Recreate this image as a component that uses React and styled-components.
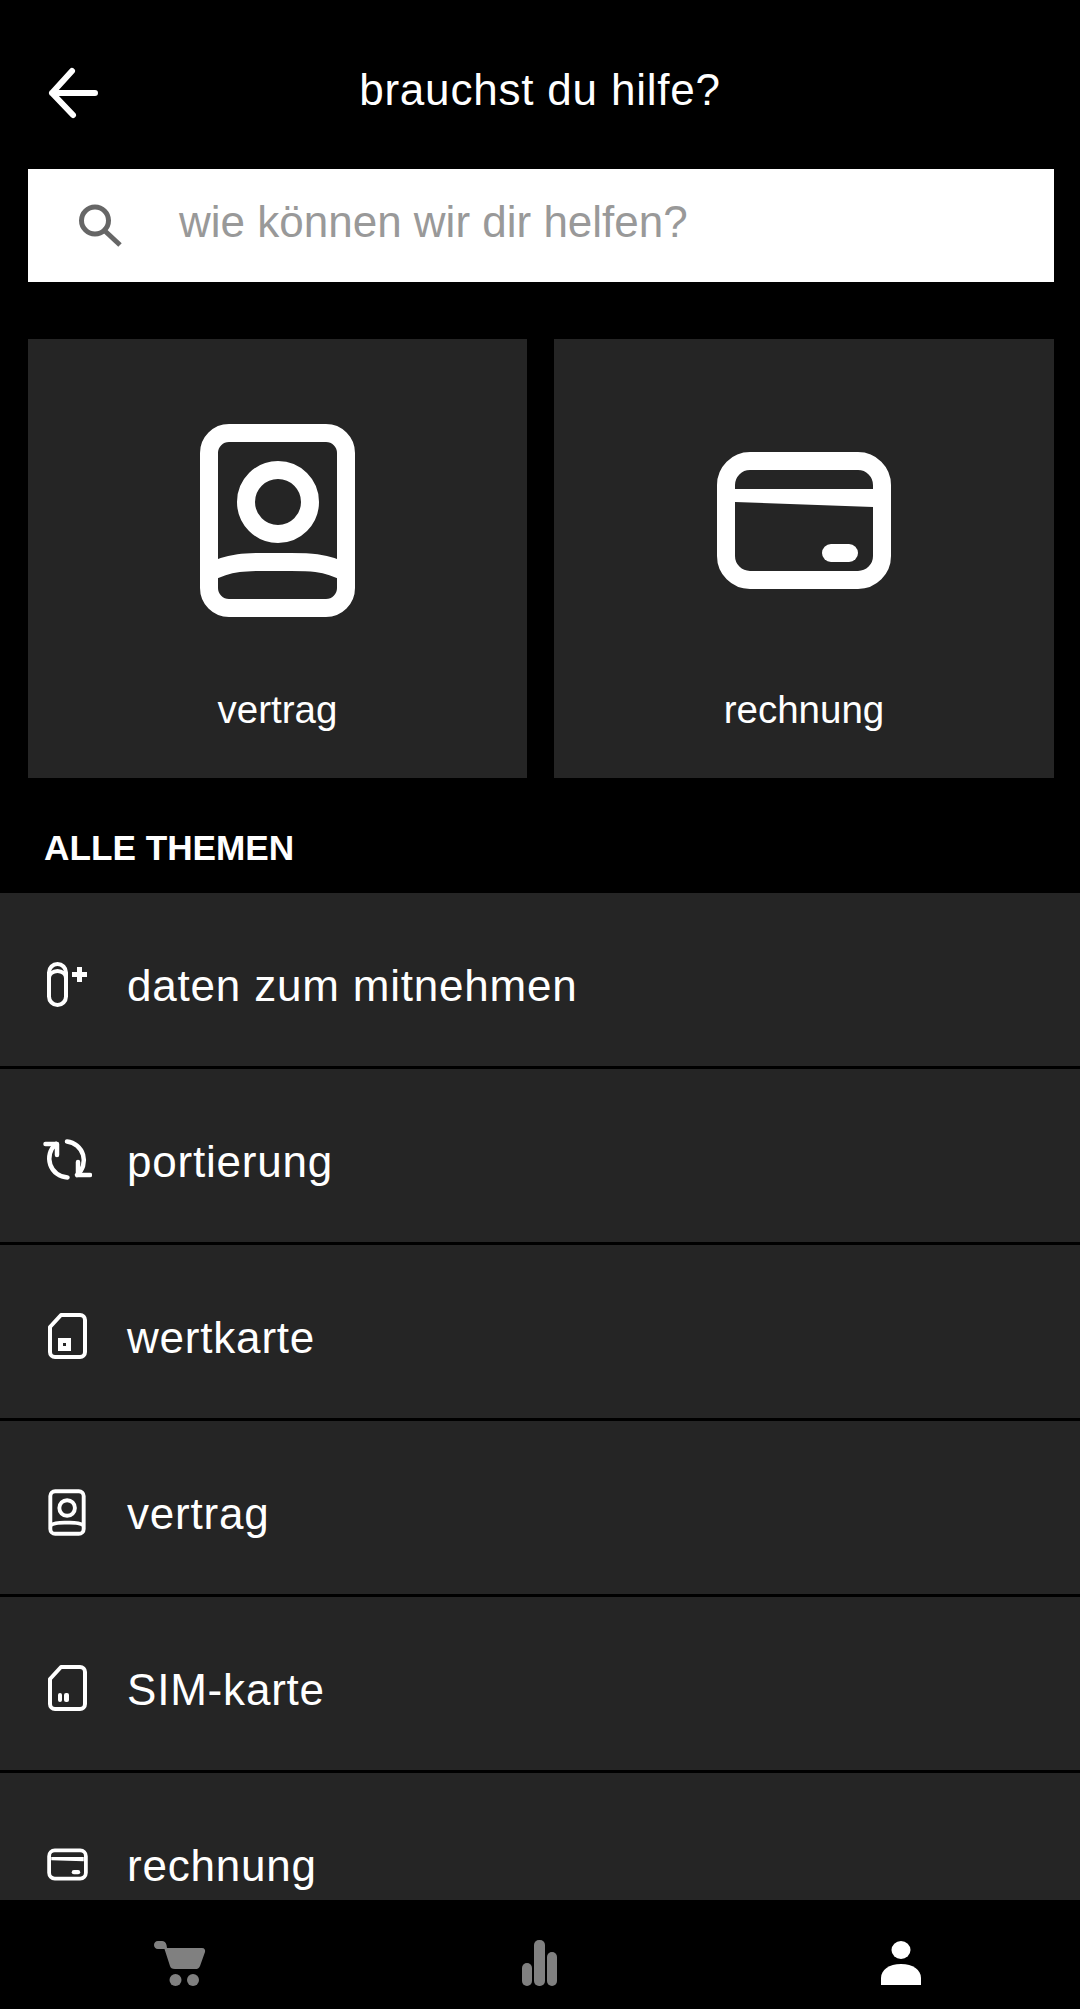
import styled, { createGlobalStyle } from "styled-components"

const GlobalStyle = createGlobalStyle`
html,body{
    margin:0;
    padding:0;
    background:#000;
}
body{
    font-family:"Liberation Sans",Arial,sans-serif;
}
`
const Page = styled.div`
width:1080px;
height:2009px;
background:#000;
color:#fff;
display:flex;
flex-direction:column;
overflow:hidden;
`
const Header = styled.header`
height:169px;
flex:none;
display:flex;
align-items:center;
justify-content:center;
position:relative;
padding-top:11px;
box-sizing:border-box;
`
const Title = styled.h1`
margin:0;
font-size:44px;
font-weight:normal;
letter-spacing:0.8px;
`
const Back = styled.svg`
position:absolute;
left:46px;
top:66px;
`
const Scroll = styled.div`
flex:1;
min-height:0;
overflow:hidden;
`
const Search = styled.div`
height:113px;
margin:0 26px 0 28px;
background:#fff;
display:flex;
align-items:center;
padding-left:46px;
box-sizing:border-box;
color:#999;
font-size:44px;
`
const SearchText = styled.span`
margin-left:55px;
margin-top:-7px;
`
const Cards = styled.div`
display:grid;
grid-template-columns:499px 500px;
gap:27px;
margin:57px 26px 0 28px;
`
const Card = styled.div`
height:439px;
background:#252525;
display:flex;
flex-direction:column;
align-items:center;
`
const CardIcon = styled.div`
height:340px;
flex:none;
display:flex;
align-items:center;
justify-content:center;
padding-top:22px;
box-sizing:border-box;
`
const CardLabel = styled.div`
font-size:38.5px;
line-height:44px;
margin-top:9px;
`
const Section = styled.h2`
margin:50px 0 0 44px;
font-size:35.2px;
line-height:40px;
font-weight:bold;
height:65px;
`
const Row = styled.div`
height:173px;
margin-bottom:3px;
background:#252525;
display:flex;
align-items:center;
padding-left:${p => p.$left}px;
box-sizing:border-box;
`
const RowIcon = styled.div`
width:${p => 127 - p.$left}px;
flex:none;
display:flex;
margin-top:${p => p.$shift}px;
`
const RowLabel = styled.div`
font-size:44px;
letter-spacing:0.8px;
margin-top:13px;
`
const Nav = styled.nav`
height:109px;
flex:none;
background:#000;
display:flex;
align-items:flex-start;
padding-top:40px;
box-sizing:border-box;
`
const NavItem = styled.div`
width:360px;
display:flex;
justify-content:center;
`

const ContactIcon = ({ width, height, sw = 18 }) => (
    <svg width={width} height={height} viewBox="0 0 155 193" fill="none" stroke="#fff" strokeWidth={sw}>
        <rect x="9" y="9" width="137" height="175" rx="20" />
        <circle cx="78" cy="78" r="32" />
        <path d="M9 149 C30 136 55 138 78 138 C100 138 125 136 146 149" />
    </svg>
)

const WalletIcon = ({ width, height, sw = 18 }) => (
    <svg width={width} height={height} viewBox="0 0 174 137" fill="none" stroke="#fff" strokeWidth={sw}>
        <rect x="9" y="9" width="156" height="119" rx="24" />
        <path d="M18 37 H156 V55 L18 50 Z" fill="#fff" stroke="none" />
        <rect x="105" y="92" width="36" height="18" rx="9" fill="#fff" stroke="none" />
    </svg>
)

const SimIcon = ({ kind }) => (
    <svg width="39" height="46" viewBox="0 0 39 46" fill="none" stroke="#fff" strokeWidth="4">
        <path d="M2 14 L13 2 H32 A5 5 0 0 1 37 7 V39 A5 5 0 0 1 32 44 H7 A5 5 0 0 1 2 39 Z" strokeLinejoin="round" />
        {kind === "chip" && <rect x="12.500" y="27.500" width="8" height="8" strokeWidth="5" />}
        {kind === "bars" && (
            <>
                <rect x="10" y="28" width="4" height="9" rx="2" fill="#fff" stroke="none" />
                <rect x="16" y="28" width="5" height="9" rx="2" fill="#fff" stroke="none" />
            </>
        )}
    </svg>
)

const DataIcon = () => (
    <svg width="40" height="45" viewBox="0 0 40 45" fill="none" stroke="#fff" strokeWidth="4">
        <rect x="2" y="2" width="17" height="41" rx="8.5" />
        <path d="M2 16 A8.5 7 0 0 1 19 16" />
        <path d="M25 12.500 H40 M32.500 5 V20" strokeWidth="5" />
    </svg>
)

const SwapIcon = () => (
    <svg width="49" height="41" viewBox="0 0 49 41" fill="none" stroke="#fff" strokeWidth="4.500" strokeLinecap="round" strokeLinejoin="round">
        <path d="M2.500 5 H14 V16" />
        <path d="M13 5 A19 19 0 0 0 24.500 38.500" />
        <path d="M35 23 V36 H47" />
        <path d="M24 2.500 A19 19 0 0 1 34 36" />
    </svg>
)

const topics = [
    { label: "daten zum mitnehmen", left: 47, shift: 10, icon: <DataIcon /> },
    { label: "portierung", left: 43, shift: 8, icon: <SwapIcon /> },
    { label: "wertkarte", left: 48, shift: 9, icon: <SimIcon kind="chip" /> },
    { label: "vertrag", left: 48, shift: 9, icon: <ContactIcon width={38} height={47} sw={16} /> },
    { label: "SIM-karte", left: 48, shift: 9, icon: <SimIcon kind="bars" /> },
    { label: "rechnung", left: 47, shift: 10, icon: <WalletIcon width={41} height={33} sw={16} /> },
]

const App = () => {
    return (
        <Page>
            <GlobalStyle />
            <Header>
                <Back width="54" height="54" viewBox="0 0 54 54" fill="none" stroke="#fff" strokeWidth="6" strokeLinecap="round" strokeLinejoin="round">
                    <path d="M26 5 L6 27 L27 49 M6 27 H49" />
                </Back>
                <Title>brauchst du hilfe?</Title>
            </Header>
            <Scroll>
                <Search>
                    <svg width="50" height="50" viewBox="0 0 50 50" fill="none" stroke="#666" strokeWidth="5">
                        <circle cx="21" cy="19.500" r="13.500" />
                        <path d="M31 30 L46 44" />
                    </svg>
                    <SearchText>wie können wir dir helfen?</SearchText>
                </Search>
                <Cards>
                    <Card>
                        <CardIcon><ContactIcon width={155} height={193} /></CardIcon>
                        <CardLabel>vertrag</CardLabel>
                    </Card>
                    <Card>
                        <CardIcon><WalletIcon width={174} height={137} /></CardIcon>
                        <CardLabel>rechnung</CardLabel>
                    </Card>
                </Cards>
                <Section>ALLE THEMEN</Section>
                {topics.map(t => (
                    <Row key={t.label} $left={t.left}>
                        <RowIcon $left={t.left} $shift={t.shift}>{t.icon}</RowIcon>
                        <RowLabel>{t.label}</RowLabel>
                    </Row>
                ))}
            </Scroll>
            <Nav>
                <NavItem>
                    <svg width="52" height="46" viewBox="0 0 52 46" fill="#808080">
                        <path d="M4 1 H8 C10 1 12 2.500 12.500 5 L13 8 H48 C50.500 8 51.500 10 51 12 L46 26 C45 28.500 43.500 29 41 29 H21 C18 29 16.500 28 16 26 L10.500 9 H4 C1.500 9 0 7 0 5 C0 3 1.500 1 4 1 Z" />
                        <ellipse cx="21.500" cy="40" rx="6" ry="6" />
                        <ellipse cx="39" cy="40" rx="6" ry="6" />
                    </svg>
                </NavItem>
                <NavItem>
                    <svg width="36" height="46" viewBox="0 0 36 46" fill="#808080">
                        <rect x="0" y="23" width="10" height="23" rx="5" />
                        <rect x="12" y="0" width="11" height="46" rx="5" />
                        <rect x="25" y="12" width="10" height="34" rx="5" />
                    </svg>
                </NavItem>
                <NavItem>
                    <svg width="41" height="45" viewBox="-1 0 41 45" fill="#fff">
                        <ellipse cx="20" cy="10" rx="9.500" ry="9" />
                        <path d="M0 45 V38 C0 30 8 24 20 24 C32 24 40 30 40 38 V45 Z" />
                    </svg>
                </NavItem>
            </Nav>
        </Page>
    )
}

export default App
